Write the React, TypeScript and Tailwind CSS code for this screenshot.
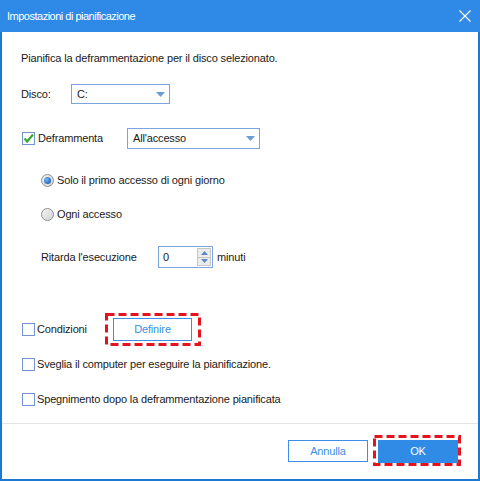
import React from 'react';

const Check = ({ checked = false }: { checked?: boolean }) => (
  <span className="relative block w-[13px] h-[13px] border border-[#7393d2] bg-white shrink-0">
    {checked && (
      <svg className="absolute -left-[1px] -top-[1px]" width="13" height="13" viewBox="0 0 13 13">
        <path d="M2.5 6.5 L5.2 9.5 L11 2.5" fill="none" stroke="#3aaa35" strokeWidth="2.2" />
      </svg>
    )}
  </span>
);

const Radio = ({ checked = false }: { checked?: boolean }) => (
  <span className="w-[13px] h-[13px] rounded-full border border-[#8e8f8f] bg-gradient-to-br from-[#f4f4f4] to-[#d2d2d2] flex items-center justify-center shrink-0">
    {checked && (
      <span className="w-[7px] h-[7px] rounded-full bg-[radial-gradient(circle_at_35%_35%,#74b9ff,#0b4a9e)]" />
    )}
  </span>
);

const Select = ({ value, width }: { value: string; width: string }) => (
  <div className={`h-full border border-[#7ba3dd] bg-white flex items-center pl-[5px] pr-[4px] ${width}`}>
    <span className="flex-1">{value}</span>
    <svg width="9" height="5" viewBox="0 0 9 5">
      <path d="M0 0h9L4.5 5z" fill="#6d9bd8" />
    </svg>
  </div>
);

const CheckRow = ({ label, checked }: { label: string; checked?: boolean }) => (
  <div className="flex items-center gap-[2px] pl-[1px]">
    <Check checked={checked} />
    <span>{label}</span>
  </div>
);

const DashFrame = ({ className }: { className: string }) => (
  <svg className={`absolute pointer-events-none ${className}`} width="100%" height="100%">
    <rect x="1.5" y="1.5" width="calc(100% - 3px)" height="calc(100% - 3px)" fill="none" stroke="#e3141d" strokeWidth="3" strokeDasharray="8 4" />
  </svg>
);

export default function App() {
  return (
    <div className="w-[480px] h-[481px] flex flex-col bg-white text-[11px] tracking-[-0.15px] leading-none text-[#1a1a1a] font-['Liberation_Sans',Arial,sans-serif]">
      <div className="h-[32px] bg-[#2e8ae6] flex items-center justify-between pl-[7px] pr-[9px] shrink-0">
        <span className="text-white text-[11px] tracking-[-0.5px]">Impostazioni di pianificazione</span>
        <svg width="12" height="12" viewBox="0 0 12 12">
          <path d="M0.5 0.5L11.5 11.5M11.5 0.5L0.5 11.5" stroke="white" strokeWidth="1.2" />
        </svg>
      </div>

      <div className="flex-1 flex flex-col border-x-2 border-b-2 border-[#1c79d3]">
        <div className="flex-1 flex flex-col pl-[19px]">
          <div className="mt-[16px] h-[20px] flex items-center">
            Pianifica la deframmentazione per il disco selezionato.
          </div>

          <div className="mt-[16px] h-[20px] flex items-center">
            <span className="w-[50px]">Disco:</span>
            <Select value="C:" width="w-[99px]" />
          </div>

          <div className="mt-[24px] h-[21px] flex items-center">
            <div className="w-[106px] flex items-center gap-[3px] pl-[1px]">
              <Check checked />
              <span>Deframmenta</span>
            </div>
            <Select value="All'accesso" width="w-[133px]" />
          </div>

          <div className="mt-[21px] h-[20px] flex items-center gap-[3px] pl-[20px]">
            <Radio checked />
            <span>Solo il primo accesso di ogni giorno</span>
          </div>

          <div className="mt-[14px] h-[20px] flex items-center gap-[3px] pl-[20px]">
            <Radio />
            <span>Ogni accesso</span>
          </div>

          <div className="mt-[22px] h-[22px] flex items-center pl-[20px]">
            <span className="w-[117px]">Ritarda l'esecuzione</span>
            <div className="w-[55px] h-full border border-[#7ba3dd] bg-white flex items-center pl-[4px] pr-[1px]">
              <span className="flex-1">0</span>
              <div className="w-[14px] h-[18px] flex flex-col border border-[#c6c6c6] bg-[#ececec]">
                <div className="flex-1 flex items-center justify-center border-b border-[#c6c6c6]">
                  <svg width="7" height="4" viewBox="0 0 7 4"><path d="M0 4h7L3.5 0z" fill="#5b86c9" /></svg>
                </div>
                <div className="flex-1 flex items-center justify-center">
                  <svg width="7" height="4" viewBox="0 0 7 4"><path d="M0 0h7L3.5 4z" fill="#5b86c9" /></svg>
                </div>
              </div>
            </div>
            <span className="ml-[4px]">minuti</span>
          </div>

          <div className="mt-[50px] h-[23px] flex items-center">
            <div className="w-[92px]">
              <CheckRow label="Condizioni" />
            </div>
            <div className="relative h-full">
              <button className="w-[79px] h-full border border-[#3b8fe6] bg-white text-[#3b8fe6] text-[11px]">
                Definire
              </button>
              <DashFrame className="-left-[8px] -top-[5px] w-[96px] h-[33px]" />
            </div>
          </div>

          <div className="mt-[13px] h-[20px] flex items-center">
            <CheckRow label="Sveglia il computer per eseguire la pianificazione." />
          </div>

          <div className="mt-[15px] h-[20px] flex items-center">
            <CheckRow label="Spegnimento dopo la deframmentazione pianificata" />
          </div>
        </div>

        <div className="h-[56px] shrink-0 border-t border-[#e5e5e5] flex justify-end gap-[10px] pt-[16px] pr-[20px]">
          <button className="w-[80px] h-[22px] border border-[#3b8fe6] bg-white text-[#3b8fe6] text-[11px]">
            Annulla
          </button>
          <div className="relative">
            <button className="w-[80px] h-[23px] bg-[#2f8be6] text-white text-[11px]">OK</button>
            <DashFrame className="-left-[5px] -top-[5px] w-[88px] h-[31px]" />
          </div>
        </div>
      </div>
    </div>
  );
}
